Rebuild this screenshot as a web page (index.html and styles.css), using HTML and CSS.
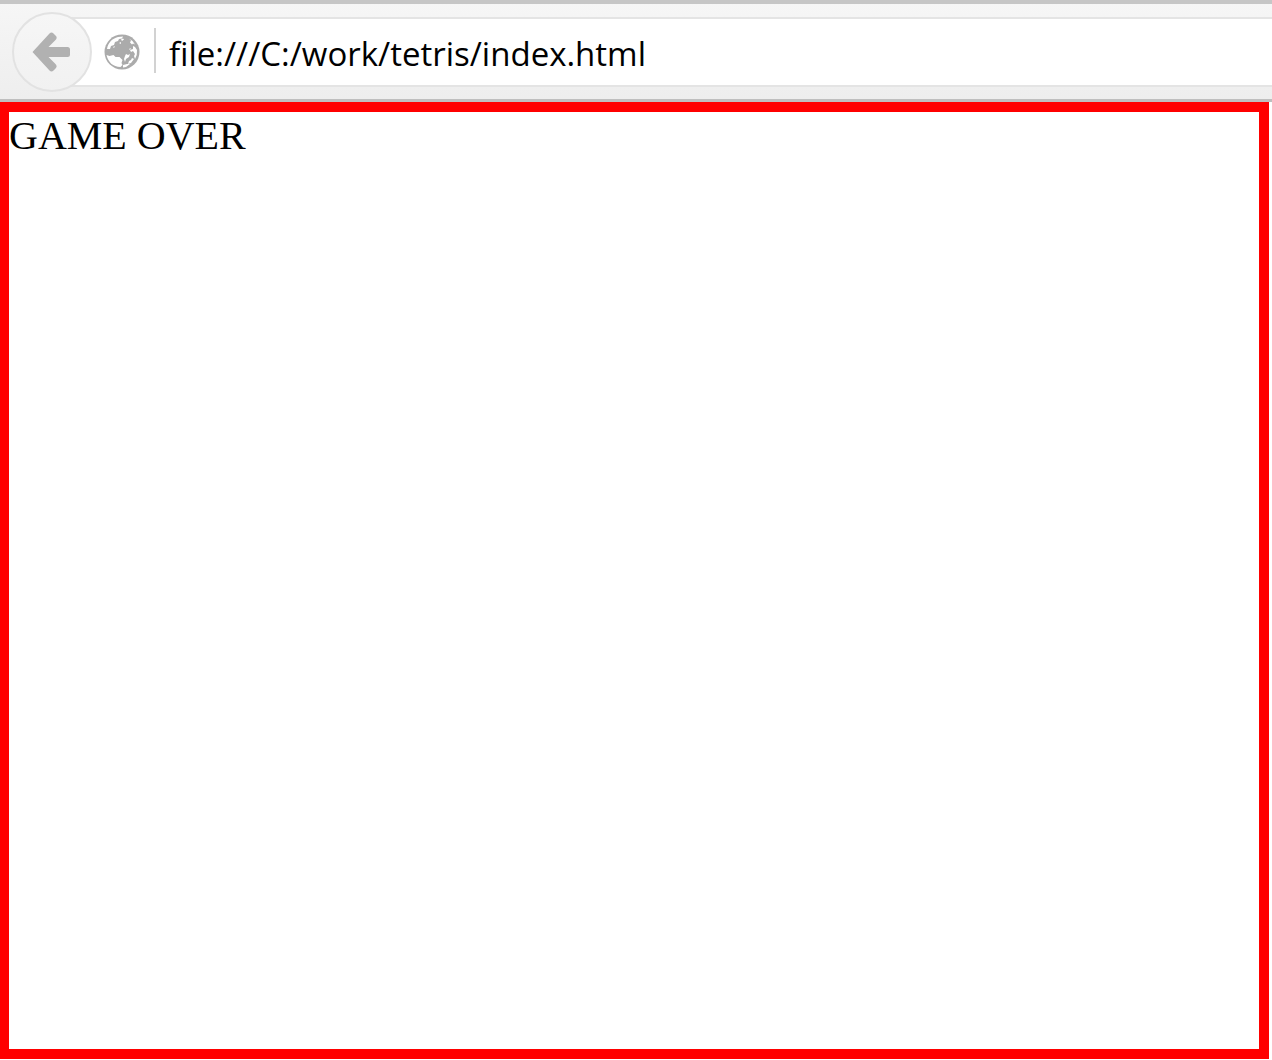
FILE: index.html
```html
<!DOCTYPE html>
<html lang="en">
<head>
  <meta charset="utf-8">
  <meta name="viewport" content="width=device-width, initial-scale=1">
  <title>Tetris</title>
  <link rel="stylesheet" href="styles.css">
</head>
<body>
  <header class="toolbar">
    <button class="back" type="button" aria-label="Back">
      <svg class="back-icon" viewBox="0 0 40 40" aria-hidden="true">
        <path d="M.5 20 17.500 1.500q2-2 4 0l2.500 2.500q1.500 2-.5 4L16.500 15H35.500q2.500 0 2.500 2.500v5q0 2.500-2.500 2.500H16.500l7 7q2 2 .5 4L21.500 38.500q-2 2-4 0z" fill="#b1b1b1"/>
      </svg>
    </button>
    <div class="location">
      <svg class="globe" viewBox="0 0 36 36" aria-hidden="true">
        <circle cx="18" cy="18" r="17.500" fill="#ababab"/>
        <g fill="#fff">
          <path d="M3 15C4 9 8 4.500 14 3l5-.5-1 2-3 .5-1 2-3 1-1 3-3 1-1 3z"/>
          <path d="M17 5.500l2-1 1 1-2 1.500zM25 4.500q4 2 6 6l-2-1-1 1-2-2 1-2z"/>
          <path d="M29 12l2 1 2 3q.5 5-2 9l-1-3 1-2-2-3-2 1-1-2 3-1z"/>
          <path d="M2.500 21l3 1 4-1 2 2 4 0 3 3-1 3 1 2-2 2C9 33 4 28 2.500 21z"/>
          <path d="M22 20l2 1 2-1-1 3-3 2-1 3-1-3 1-3zM28 24l2 1-3 4-3 1 1-3 2-1zM19 31l4-1 3 0-4 3-3 .5z"/>
          <path d="M15 9l2-1v2zM9 13l2-1-1 2zM26 14l1 1-2 1z"/>
        </g>
      </svg>
      <input class="url" type="text" aria-label="Address" value="file:///C:/work/tetris/index.html" spellcheck="false">
    </div>
  </header>
  <main class="board">GAME OVER</main>
</body>
</html>
```
FILE: styles.css
```css
* {
  box-sizing: border-box;
}

body {
  display: flex;
  flex-direction: column;
  min-height: 100vh;
  margin: 0;
  background: #fff;
}

.toolbar {
  display: flex;
  align-items: center;
  padding: 8px 0 7px 12px;
  border-top: 4px solid #c6c6c6;
  border-bottom: 3px solid #bfbfbf;
  background: linear-gradient(#f6f6f6, #eee);
}

.back {
  z-index: 1;
  display: flex;
  flex: none;
  align-items: center;
  justify-content: center;
  width: 80px;
  height: 80px;
  padding: 0;
  border: 2px solid #e2e2e2;
  border-radius: 50%;
  background: linear-gradient(#f6f6f6, #f1f1f1);
}

.back-icon {
  width: 40px;
  height: 40px;
}

.location {
  display: flex;
  flex: 1;
  align-items: center;
  height: 70px;
  margin-left: -24px;
  padding-left: 36px;
  border: solid #e4e4e4;
  border-width: 2px 0;
  background: #fff;
}

.globe {
  flex: none;
  width: 36px;
  height: 36px;
}

.url {
  flex: 1;
  align-self: flex-start;
  min-width: 0;
  height: 45px;
  margin: 9px 0 0 14px;
  padding: 5px 0 0 13px;
  border: 0;
  border-left: 2px solid #d2d2d2;
  background: none;
  color: #000;
  font: 33px/40px "Open Sans", "Noto Sans", sans-serif;
}

.board {
  flex: 1;
  margin: 0 3px 1px 0;
  border: 10px solid #f00;
  border-left-width: 9px;
  color: #000;
  font: 40px/48px "Liberation Serif", "Times New Roman", serif;
}
```
